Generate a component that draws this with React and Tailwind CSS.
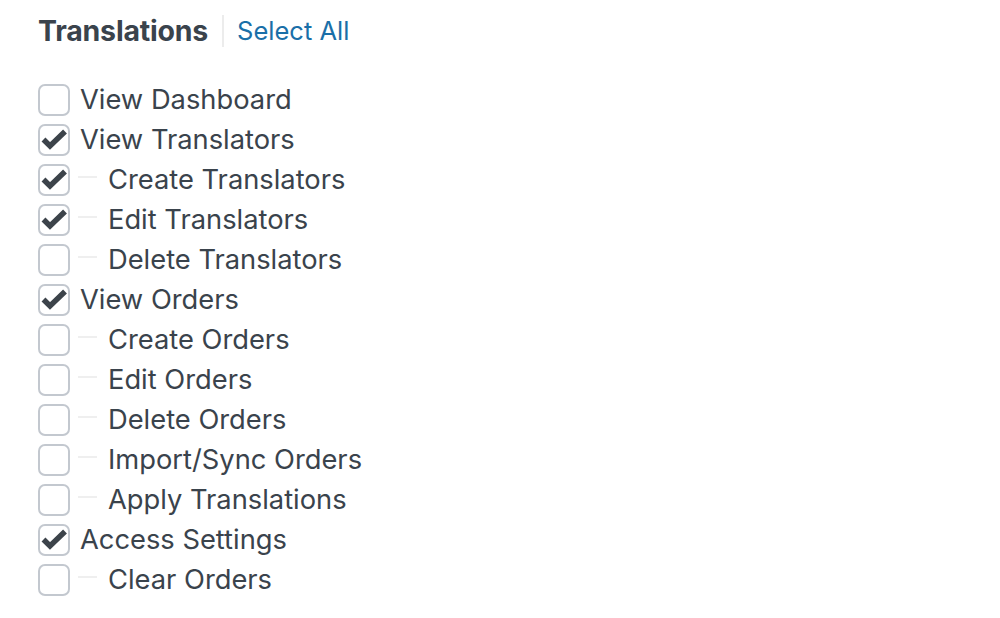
import React, { useState } from "react";

const items = [
    { label: "View Dashboard", checked: false, child: false },
    { label: "View Translators", checked: true, child: false },
    { label: "Create Translators", checked: true, child: true },
    { label: "Edit Translators", checked: true, child: true },
    { label: "Delete Translators", checked: false, child: true },
    { label: "View Orders", checked: true, child: false },
    { label: "Create Orders", checked: false, child: true },
    { label: "Edit Orders", checked: false, child: true },
    { label: "Delete Orders", checked: false, child: true },
    { label: "Import/Sync Orders", checked: false, child: true },
    { label: "Apply Translations", checked: false, child: true },
    { label: "Access Settings", checked: true, child: false },
    { label: "Clear Orders", checked: false, child: true },
];

function Checkbox({ checked, onChange }) {
    return (
        <button
            type="button"
            onClick={onChange}
            className="relative w-8 h-8 shrink-0 rounded-[7px] border-2 border-[#c3c8cf] bg-white"
        >
            {checked && (
                <svg
                    viewBox="0 0 32 32"
                    className="absolute left-[-2px] top-[-2px] w-8 h-8 overflow-visible"
                >
                    <path
                        d="M5.5 15.5 L12 22 L27 7.5"
                        fill="none"
                        stroke="#3c434a"
                        strokeWidth="5.5"
                        strokeLinejoin="miter"
                    />
                </svg>
            )}
        </button>
    );
}

export default function App() {
    const [rows, setRows] = useState(items);

    const toggle = (i) =>
        setRows(rows.map((r, j) => (j === i ? { ...r, checked: !r.checked } : r)));

    const selectAll = () => setRows(rows.map((r) => ({ ...r, checked: true })));

    return (
        <div className="w-[1000px] h-[618px] bg-white pl-[38px] pt-[12px] font-['Inter',sans-serif] text-[#3a434c]">
            {/* Header */}
            <div className="flex items-center h-[38px]">
                <h2 className="text-[28.5px] font-bold text-[#3a434c] tracking-[-0.2px]">Translations</h2>
                <div className="w-[2px] h-[32px] bg-[#ececec] ml-[14px] mr-[13px]" />
                <button
                    type="button"
                    onClick={selectAll}
                    className="text-[25.5px] text-[#1a6fa8]"
                >
                    Select All
                </button>
            </div>

            {/* Capabilities */}
            <div className="mt-[30px] flex flex-col">
                {rows.map((r, i) => (
                    <label key={r.label} className="flex items-center h-10">
                        <Checkbox checked={r.checked} onChange={() => toggle(i)} />
                        {r.child ? (
                            <>
                                <span className="ml-2 w-[19px] h-[2px] bg-[#efefef] -translate-y-[3px]" />
                                <span className="ml-[11px] text-[27.3px] leading-none">{r.label}</span>
                            </>
                        ) : (
                            <span className="ml-[10px] text-[27.3px] leading-none">{r.label}</span>
                        )}
                    </label>
                ))}
            </div>
        </div>
    );
}
